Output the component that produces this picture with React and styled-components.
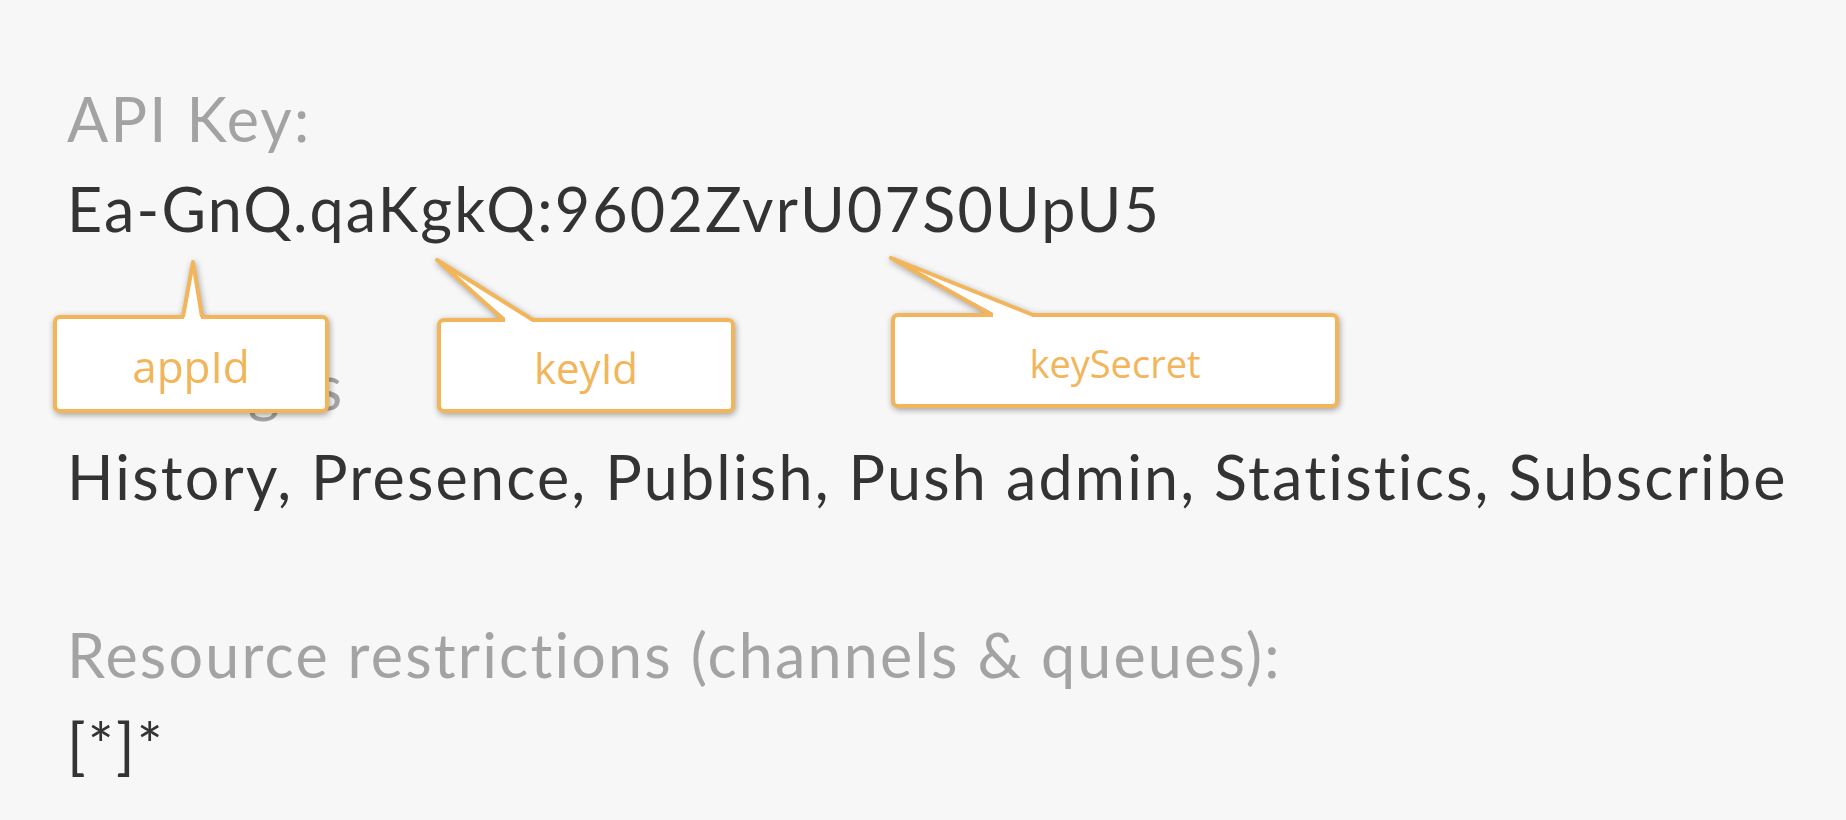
import React from "react";
import styled, { createGlobalStyle } from "styled-components";

const orange = "#f3b55a";

const GlobalStyle = createGlobalStyle`
	html, body {
		margin: 0;
		padding: 0;
		background: #f7f7f7;
	}
	body {
		font-family: Lato, "Open Sans", sans-serif;
	}
`;

const Page = styled.div`
	position: relative;
	width: 1846px;
	height: 820px;
	box-sizing: border-box;
	padding: 74px 0 0 67px;
	background: #f7f7f7;
	overflow: hidden;
`;

const Field = styled.div`
	margin-bottom: 88px;
`;

const Label = styled.div`
	font-size: 61px;
	line-height: 90px;
	letter-spacing: 2.2px;
	color: #a3a3a3;
	white-space: nowrap;
`;

const Value = styled.div`
	font-size: 61px;
	line-height: 90px;
	letter-spacing: 2.2px;
	color: #333333;
	white-space: nowrap;
`;

const Callout = styled.div`
	position: absolute;
	left: ${(p) => p.x}px;
	top: ${(p) => p.y}px;
	width: ${(p) => p.w}px;
	height: ${(p) => p.h}px;
	filter: drop-shadow(1px 2px 3px rgba(0, 0, 0, 0.35));
`;

const Box = styled.div`
	box-sizing: border-box;
	width: 100%;
	height: 100%;
	border: 4px solid ${orange};
	border-radius: 7px;
	background: #fff;
	display: flex;
	align-items: center;
	justify-content: center;
	font-family: "Open Sans", "Noto Sans", sans-serif;
	font-size: ${(p) => p.size}px;
	color: ${orange};
	padding-top: 4px;
`;

const Pointer = styled.svg`
	position: absolute;
	left: 0;
	top: 0;
	overflow: visible;
`;

const callouts = [
	{ text: "appId", x: 53, y: 315, w: 276, h: 98, size: 44, tip: [140, -53], base: [130, 149] },
	{ text: "keyId", x: 437, y: 318, w: 298, h: 95, size: 42, tip: [0, -58], base: [67, 96] },
	{ text: "keySecret", x: 891, y: 313, w: 448, h: 95, size: 38, tip: [0, -55], base: [101, 142] },
];

const Tail = ({ tip, base }) => {
	const [tx, ty] = tip;
	const [b1, b2] = base;
	return (
		<Pointer width="1" height="1">
			<path d={`M${b1 + 1} 0 L${tx} ${ty} L${b2 - 1} 0 L${b2 - 1} 5 L${b1 + 1} 5 Z`} fill="#fff" />
			<path
				d={`M${b1} 2 L${tx} ${ty} L${b2} 2`}
				fill="none"
				stroke={orange}
				strokeWidth="4"
				strokeLinejoin="round"
			/>
		</Pointer>
	);
};

export default function App() {
	return (
		<Page>
			<GlobalStyle />
			<Field>
				<Label>API Key:</Label>
				<Value>Ea-GnQ.qaKgkQ:9602ZvrU07S0UpU5</Value>
			</Field>
			<Field>
				<Label>Privileges</Label>
				<Value>History, Presence, Publish, Push admin, Statistics, Subscribe</Value>
			</Field>
			<Field>
				<Label>Resource restrictions (channels &amp; queues):</Label>
				<Value>[*]*</Value>
			</Field>
			{callouts.map((c) => (
				<Callout key={c.text} x={c.x} y={c.y} w={c.w} h={c.h}>
					<Box size={c.size}>{c.text}</Box>
					<Tail tip={c.tip} base={c.base} />
				</Callout>
			))}
		</Page>
	);
}
